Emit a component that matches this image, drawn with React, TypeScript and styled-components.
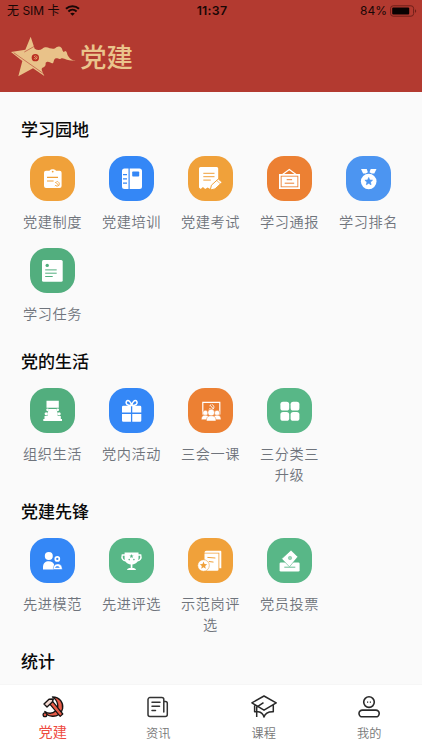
import React from "react";
import styled, { createGlobalStyle } from "styled-components";

const GlobalStyle = createGlobalStyle`
  * { box-sizing: border-box; }
  html, body { margin: 0; padding: 0; }
  body { font-family: "Noto Sans CJK SC", "Noto Sans", sans-serif; background: #fafafa; }
`;

const Screen = styled.div`
  width: 422px;
  height: 750px;
  display: flex;
  flex-direction: column;
  overflow: hidden;
  background: #fafafa;
`;

const Header = styled.header`
  flex: none;
  height: 92px;
  background: #b33a30;
`;

const StatusBar = styled.div`
  height: 21px;
  display: grid;
  grid-template-columns: 1fr auto 1fr;
  align-items: center;
  padding: 0 5px 0 7px;
  font-family: Inter, "Noto Sans CJK SC", sans-serif;
  font-size: 12px;
  line-height: 20px;
  color: #190706;
`;

const Carrier = styled.div`
  display: flex;
  align-items: center;
  white-space: pre;
  gap: 5px;
`;

const Clock = styled.div`
  font-weight: 600;
  font-size: 12.3px;
  letter-spacing: 0.3px;
`;

const Power = styled.div`
  display: flex;
  justify-content: flex-end;
  align-items: center;
  gap: 3px;
`;

const Brand = styled.div`
  display: flex;
  height: 71px;
  padding: 9px 0 0 5px;
`;

const BrandName = styled.h1`
  margin: 0;
  font-size: 26.5px;
  line-height: 51px;
  font-weight: 500;
  color: #eac48c;
`;

const Content = styled.main`
  flex: 1;
  min-height: 0;
  overflow: hidden;
  padding: 16px 14px 0 13px;
`;

const SectionTitle = styled.h2`
  margin: 0;
  height: 48px;
  padding-left: 8px;
  font-size: 17px;
  line-height: 41px;
  font-weight: 500;
  color: #0a0a0a;
`;

const Grid = styled.div`
  display: grid;
  grid-template-columns: repeat(5, 79px);
`;

const Entry = styled.div`
  min-height: 92px;
  padding-bottom: 6px;
  display: flex;
  flex-direction: column;
  align-items: center;
`;

const Tile = styled.div<{ $color: string }>`
  width: 45px;
  height: 45px;
  border-radius: 17px;
  background: ${(p) => p.$color};
  color: ${(p) => p.$color};

  svg { display: block; }
`;

const Label = styled.div`
  width: 62px;
  margin-top: 10px;
  font-size: 14.2px;
  letter-spacing: 0.6px;
  line-height: 20.5px;
  font-weight: 350;
  text-align: center;
  color: #6f747c;
`;

const TabBar = styled.nav`
  flex: none;
  height: 66px;
  display: grid;
  grid-template-columns: repeat(4, 1fr);
  background: #fff;
  border-top: 1px solid #f6f6f6;
`;

const Tab = styled.div<{ $active?: boolean }>`
  display: flex;
  flex-direction: column;
  align-items: center;
  padding-top: 9px;
  font-size: ${(p) => (p.$active ? "14.2px" : "12.2px")};
  font-weight: ${(p) => (p.$active ? 400 : 350)};
  line-height: 20px;
  color: ${(p) => (p.$active ? "#ee4a40" : "#777")};

  svg { display: block; margin-bottom: ${(p) => (p.$active ? "1px" : "3px")}; }
`;

const starPath = (cx: number, cy: number, r: number) =>
  Array.from({ length: 10 }, (_, i) => {
    const a = -Math.PI / 2 + (i * Math.PI) / 5;
    const d = i % 2 ? r * 0.45 : r;
    return `${(cx + d * Math.cos(a)).toFixed(2)},${(cy + d * Math.sin(a)).toFixed(2)}`;
  }).join(" ");

const Sickle = ({ transform, stroke = "currentColor" }: { transform: string; stroke?: string }) => (
  <g transform={transform} fill="none" stroke={stroke} strokeWidth="2.6">
    <path d="M9 1c8 3 8 13 0 14-3 0-5-1-6-3M2 15l2-2M3 5l4-3M5 4l9 10" />
  </g>
);

const glyphs: Record<string, React.ReactNode> = {
  clipboard: (
    <>
      <path fill="#fff" d="M16 14.7h3.6c.4-2 5.9-2 6.3 0h3.7a2 2 0 0 1 2 2V30a2 2 0 0 1-2 2H16a2 2 0 0 1-2-2V16.700a2 2 0 0 1 2-2z" />
      <circle cx="22.7" cy="15.6" r=".9" fill="currentColor" />
      <path d="M17 21.400h11M17 25h6.600" stroke="currentColor" strokeWidth="1.2" />
      <Sickle transform="translate(24.2 25) scale(.34)" />
    </>
  ),
  book: (
    <>
      <path fill="#fff" d="M15.500 12.500h4v20.500h-4a2.500 2.500 0 0 1-2.500-2.500V15a2.500 2.500 0 0 1 2.500-2.500zM20.700 12.500h9.800A2.500 2.500 0 0 1 33 15v15.500a2.500 2.500 0 0 1-2.500 2.500h-9.800z" />
      <rect x="23.200" y="15.500" width="7" height="5" rx=".8" fill="currentColor" />
      <path d="M14 18.600h4M14 22.900h4M14 27.200h4" stroke="currentColor" strokeWidth="1.300" />
    </>
  ),
  exam: (
    <>
      <path fill="#fff" d="M12.500 11h16.200a1.500 1.500 0 0 1 1.500 1.500V30l-3 3-2.500-1.600-2.500 1.600-2.600-1.600-2.400 1.600-2.300-2-2.200 2-1.700-1.500V12.500a1.500 1.500 0 0 1 1.500-1.500z" />
      <path d="M15.300 17.300h11.200M15.300 20.700h11.200M15.300 24.100h7.500" stroke="currentColor" strokeWidth="1" />
      <path d="M22.300 34l1.100-4.800 6.900-6.200 3.900 3.300-7.200 6.600z" fill="#fff" stroke="currentColor" strokeWidth="1" />
      <path d="M28.700 24.500l3.700 3.300" stroke="currentColor" strokeWidth=".7" />
    </>
  ),
  board: (
    <>
      <path d="M15.500 18.600l6.800-5 6.800 5" fill="none" stroke="#fff" strokeWidth="1.200" />
      <path fill="#fff" fillRule="evenodd" d="M12 18h21v15H12zM13.700 19.700v11.600h17.600V19.700z" />
      <rect x="14.600" y="20.600" width="15.800" height="9.800" fill="#fff" />
      <path d="M19.700 23.700h5.400M17.700 27.200h9.500" stroke="currentColor" strokeWidth="1" />
    </>
  ),
  medal: (
    <>
      <path fill="#fff" d="M15 13h5.700l1.200 3.200-2.200 1.300h-2.600zM24.700 13h5.800l-2.200 4.500h-2.600l-2.200-1.300z" />
      <circle cx="22.700" cy="25.500" r="7.800" fill="#fff" />
      <polygon points={starPath(22.700, 25.500, 4)} fill="currentColor" stroke="currentColor" strokeWidth=".7" strokeLinejoin="round" />
    </>
  ),
  task: (
    <>
      <rect x="12" y="11.900" width="20.700" height="21.900" rx="1.500" fill="#fff" />
      <circle cx="17.200" cy="17.400" r="1.700" fill="currentColor" />
      <path d="M15.200 21.900h11.500M15.200 25.200h11.500M15.200 28.500h7.500" stroke="currentColor" strokeWidth="1" />
    </>
  ),
  meeting: (
    <g fill="#fff">
      <path d="M16.500 12.700h12.300v7.100H16.500zM19 21h7.200l1.500 4v7.500H17.500V25z" />
      <circle cx="17.600" cy="21.800" r="1.400" /><circle cx="27.700" cy="21.800" r="1.400" />
      <circle cx="16.200" cy="25.800" r="1.600" /><circle cx="29.100" cy="25.800" r="1.600" />
      <path d="M14.500 28h4v4h-4zM26.800 28h4v4h-4zM13.300 31H32v2H13.300z" />
    </g>
  ),
  gift: (
    <>
      <path fill="#fff" d="M14.300 17.700H31a1.300 1.300 0 0 1 1.300 1.300v5.500H13V19a1.300 1.300 0 0 1 1.300-1.300zM13 26h19.300v6.500a1.300 1.300 0 0 1-1.300 1.300H14.300a1.300 1.300 0 0 1-1.300-1.300z" />
      <path d="M22.600 18v16" stroke="currentColor" strokeWidth="1.300" />
      <path d="M22.400 17.500c-4 .2-6.200-2-5-4 1.800-2.600 4.700.8 5 4zm.4 0c4 .2 6.200-2 5-4-1.800-2.600-4.700.8-5 4z" fill="none" stroke="#fff" strokeWidth="1.500" />
    </>
  ),
  lecture: (
    <>
      <path d="M16 25.800h-1.200V14.300h17v11.500h-1.200" fill="none" stroke="#fff" strokeWidth="1.200" />
      <Sickle transform="translate(20.500 16) scale(.36)" stroke="#fff" />
      <g fill="#fff" stroke="currentColor" strokeWidth=".5">
        <circle cx="17.300" cy="25" r="2.700" /><circle cx="29.100" cy="25" r="2.700" />
        <path d="M13.400 31.700c0-4 2-4.500 4-4.500 2 0 4 .8 4 4.500zM25 31.700c0-3.700 2-4.500 4-4.500s4 .5 4 4.500z" />
        <circle cx="23.200" cy="24.600" r="3.400" />
        <path d="M18.400 33c0-4.600 2.300-5.300 4.800-5.300S28 28.400 28 33z" />
      </g>
    </>
  ),
  tiles: (
    <g fill="#fff">
      <rect x="13.400" y="13.700" width="8.800" height="8.800" rx="2.600" />
      <rect x="23.600" y="13.700" width="8.800" height="8.800" rx="2.600" />
      <rect x="13.400" y="24" width="8.800" height="8.800" rx="2.600" />
      <rect x="23.600" y="24" width="8.800" height="8.800" rx="2.600" />
    </g>
  ),
  people: (
    <>
      <circle cx="18.800" cy="18" r="4" fill="#fff" />
      <path d="M13 31.500v-2.400c0-4 2.400-5.800 5.800-5.800 2.500 0 4.400 1 5.200 3v5.200z" fill="#fff" />
      <circle cx="27.300" cy="20.900" r="2" fill="none" stroke="#fff" strokeWidth="1.700" />
      <path d="M23.400 31.500v-1.200c0-3 1.600-4.400 4.200-4.400 3 0 4.600 1.700 4.600 5.600z" fill="#fff" stroke="currentColor" strokeWidth=".5" />
      <path d="M25 29.700c.4-2.100 4.400-2.100 4.700 0z" fill="currentColor" />
    </>
  ),
  trophy: (
    <>
      <path d="M16.500 17h-3.200c-1.200 3.600 1 6.200 4.200 5.700M28.500 17h3.200c1.200 3.600-1 6.200-4.200 5.700" fill="none" stroke="#fff" strokeWidth="1.400" />
      <path fill="#fff" d="M15.600 14.500h13.900v5.500c0 3.500-2.500 6-6.100 6.500V30c2 0 3.300.6 3.600 2h-9c.3-1.400 1.700-2 3.700-2v-3.500c-3.600-.5-6.100-3-6.100-6.500z" />
      <polygon points={starPath(22.500, 18.300, 2.200)} fill="currentColor" />
      <circle cx="20.200" cy="21.600" r=".8" fill="currentColor" /><circle cx="24.900" cy="21.600" r=".8" fill="currentColor" />
    </>
  ),
  post: (
    <>
      <path fill="#fff" d="M18.500 12.700h13.800a1 1 0 0 1 1 1v16.500h-2V14.700H16.500c0-1.200.8-2 2-2z" />
      <path fill="#fff" d="M16.500 15.500h14v16a1.300 1.300 0 0 1-1.300 1.300H16.500z" />
      <path d="M19.400 19.400l8 .6M20.800 23.500l4.700.6" stroke="currentColor" strokeWidth="1" />
      <circle cx="15.500" cy="27.500" r="5.800" fill="#fff" stroke="currentColor" strokeWidth=".6" />
      <polygon points={starPath(15.500, 27.500, 3.900)} fill="currentColor" />
    </>
  ),
  vote: (
    <>
      <rect x="12.600" y="24.500" width="20" height="9" rx="1.300" fill="#fff" />
      <path d="M17.300 29.200h11" stroke="currentColor" strokeWidth=".9" />
      <path d="M24 12.200l6.800 6.600-8.300 10-7.800-8z" fill="#fff" stroke="currentColor" strokeWidth=".6" />
      <g fill="none" stroke="currentColor" strokeWidth=".6"><circle cx="23" cy="20" r="1.700" /><path d="M22 19l2 2M24 19l-2 2" /></g>
    </>
  ),
};

const ORANGE = "#f0a13a";
const DEEP = "#ec8033";
const BLUE = "#3487f6";
const SKY = "#4c95f1";
const GREEN = "#52ae7e";
const MINT = "#58b787";

const sections = [
  {
    title: "学习园地",
    items: [
      ["党建制度", ORANGE, "clipboard"],
      ["党建培训", BLUE, "book"],
      ["党建考试", ORANGE, "exam"],
      ["学习通报", DEEP, "board"],
      ["学习排名", SKY, "medal"],
      ["学习任务", GREEN, "task"],
    ],
  },
  {
    title: "党的生活",
    items: [
      ["组织生活", GREEN, "meeting"],
      ["党内活动", BLUE, "gift"],
      ["三会一课", DEEP, "lecture"],
      ["三分类三升级", MINT, "tiles"],
    ],
  },
  {
    title: "党建先锋",
    items: [
      ["先进模范", BLUE, "people"],
      ["先进评选", MINT, "trophy"],
      ["示范岗评选", ORANGE, "post"],
      ["党员投票", MINT, "vote"],
    ],
  },
  { title: "统计", items: [] },
];

const Logo = () => (
  <svg width="75" height="50" viewBox="0 0 225 150">
    <path
      fill="#e9c289"
      d="M77 20l12 36c8 5 16 5 23 0 7-6 15-5 22-1 9 2 14 3 20-3 7-4 11-3 15 1 4 4 2 9 7 13l5-3c6 2 5 9 7 13 5 9 11 14 18 15 13 0-2 2-20-2-8-2-13-7-19-3-6 3-10-4-17 0-5 4-3 15-9 14-7-2-10-7-17-3-5 2 2 10-8 15-6 2-7 4-5 10l7 16L84 115l-44 24 12-46-34-27 43-7z"
    />
    <path d="M26 68l94 66" stroke="#b33a30" strokeWidth="1.800" />
    <path d="M58 66l30-17" stroke="#b33a30" strokeWidth="1.800" />
    <circle cx="91" cy="83" r="11" fill="#b92c20" />
    <Sickle transform="translate(85 76) scale(.75)" stroke="#f5cf8b" />
  </svg>
);

const Wifi = () => (
  <svg width="15" height="11" viewBox="0 0 15 11" fill="none" stroke="#190706" strokeWidth="2">
    <path d="M1 3.800c3.700-3.500 9.300-3.500 13 0M3.400 6.400c2.400-2.200 5.800-2.200 8.200 0" />
    <path d="M7.500 10.800L5.200 8.600c1.300-1.200 3.300-1.200 4.600 0z" fill="#190706" stroke="none" />
  </svg>
);

const Battery = () => (
  <svg width="27" height="12" viewBox="0 0 27 12">
    <rect x=".6" y=".8" width="23" height="10.400" rx="2.600" fill="none" stroke="#701f19" />
    <rect x="2.200" y="2.400" width="17" height="7.200" rx="1" fill="#090202" />
    <path d="M25 4.200c1.600.5 1.600 3.100 0 3.600z" fill="#701f19" />
  </svg>
);

const PartyIcon = () => (
  <svg width="26" height="26" viewBox="0 0 26 26" strokeLinecap="round" strokeLinejoin="round">
    <path d="M12.500 3C20 3 23.500 9 22.600 14.500 21.700 20 17 22.500 12.500 22.300c-2.500 0-4.500-.8-6-2L4.800 17.500C8 20 12.500 20 15.500 17c4-4 2.500-10.500-3-14z" fill="#e95c48" stroke="#171313" strokeWidth="1.400" />
    <path d="M9.200 9.400l3-2.500L22.800 20l-2.600 2.400z" fill="#e95c48" stroke="#171313" strokeWidth="1.200" />
    <path d="M4 10l5-4.800 4.300-.2-1 3-5.300 5z" fill="#f5d9d2" stroke="#171313" strokeWidth="1.400" />
    <circle cx="5" cy="20.800" r="1.900" fill="#e95c48" stroke="#171313" strokeWidth="1.300" />
  </svg>
);

const NewsIcon = () => (
  <svg width="26" height="26" viewBox="0 0 26 26" fill="none" stroke="#333" strokeWidth="1.500" strokeLinecap="round" strokeLinejoin="round">
    <path d="M18.800 14V5.600a2 2 0 0 0-2-2H5a2 2 0 0 0-2 2v15a2 2 0 0 0 2 2h15.300a2 2 0 0 0 2-2V9.300a1.800 1.800 0 0 0-1.800-1.800h-1.700M18.800 14v4M7 8.300h8M7 12.300h7.500M7 16.500h3.500" />
  </svg>
);

const CourseIcon = () => (
  <svg width="26" height="26" viewBox="0 0 26 26" fill="none" stroke="#292929" strokeWidth="1.500" strokeLinejoin="round">
    <path d="M13 2l12.200 6.800L13 16.200.9 8.800zM12.500 8.600l-6.800 4.600V23M3.600 11.500v6.300h3.600c2.800.3 4.800 1.800 5.800 5.300 1-3.500 4.200-5.500 9.300-5.300v-6.500" />
  </svg>
);

const ProfileIcon = () => (
  <svg width="26" height="26" viewBox="0 0 26 26" fill="none" stroke="#292929" strokeWidth="1.600">
    <circle cx="13" cy="8.100" r="5.300" />
    <rect x="3" y="16.100" width="20.200" height="6.700" rx="3.350" />
    <path d="M11 8.100h1.200M13.800 8.100H15" strokeWidth="1.100" />
  </svg>
);

export default function App() {
  return (
    <Screen>
      <GlobalStyle />
      <Header>
        <StatusBar>
          <Carrier>无 SIM 卡<Wifi /></Carrier>
          <Clock>11:37</Clock>
          <Power>84%<Battery /></Power>
        </StatusBar>
        <Brand>
          <Logo />
          <BrandName>党建</BrandName>
        </Brand>
      </Header>
      <Content>
        {sections.map((section) => (
          <section key={section.title}>
            <SectionTitle>{section.title}</SectionTitle>
            <Grid>
              {section.items.map(([label, color, glyph]) => (
                <Entry key={label}>
                  <Tile $color={color}>
                    <svg width="45" height="45" viewBox="0 0 45 45">{glyphs[glyph]}</svg>
                  </Tile>
                  <Label>{label}</Label>
                </Entry>
              ))}
            </Grid>
          </section>
        ))}
      </Content>
      <TabBar>
        <Tab $active><PartyIcon />党建</Tab>
        <Tab><NewsIcon />资讯</Tab>
        <Tab><CourseIcon />课程</Tab>
        <Tab><ProfileIcon />我的</Tab>
      </TabBar>
    </Screen>
  );
}
